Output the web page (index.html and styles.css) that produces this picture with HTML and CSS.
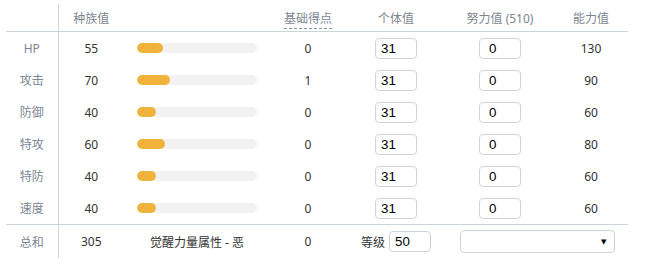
FILE: index.html
```html
<!DOCTYPE html>
<html lang="zh">
<head>
<meta charset="utf-8">
<link rel="stylesheet" href="styles.css">
</head>
<body>
<table class="stats">
  <colgroup>
    <col class="c-label"><col class="c-base"><col class="c-bar"><col class="c-pt"><col class="c-iv"><col class="c-ev"><col class="c-val">
  </colgroup>
  <thead>
    <tr>
      <th class="label"></th>
      <th>种族值</th>
      <th></th>
      <th><span class="dashed">基础得点</span></th>
      <th>个体值</th>
      <th>努力值 (510)</th>
      <th>能力值</th>
    </tr>
  </thead>
  <tbody>
    <tr>
      <td class="label">HP</td><td>55</td>
      <td><div class="bar"><div class="fill" style="width:21.57%"></div></div></td>
      <td>0</td>
      <td><input class="num iv" type="text" value="31"></td>
      <td><input class="num ev" type="text" value="0"></td>
      <td>130</td>
    </tr>
    <tr>
      <td class="label">攻击</td><td>70</td>
      <td><div class="bar"><div class="fill" style="width:27.45%"></div></div></td>
      <td>1</td>
      <td><input class="num iv" type="text" value="31"></td>
      <td><input class="num ev" type="text" value="0"></td>
      <td>90</td>
    </tr>
    <tr>
      <td class="label">防御</td><td>40</td>
      <td><div class="bar"><div class="fill" style="width:15.69%"></div></div></td>
      <td>0</td>
      <td><input class="num iv" type="text" value="31"></td>
      <td><input class="num ev" type="text" value="0"></td>
      <td>60</td>
    </tr>
    <tr>
      <td class="label">特攻</td><td>60</td>
      <td><div class="bar"><div class="fill" style="width:23.53%"></div></div></td>
      <td>0</td>
      <td><input class="num iv" type="text" value="31"></td>
      <td><input class="num ev" type="text" value="0"></td>
      <td>80</td>
    </tr>
    <tr>
      <td class="label">特防</td><td>40</td>
      <td><div class="bar"><div class="fill" style="width:15.69%"></div></div></td>
      <td>0</td>
      <td><input class="num iv" type="text" value="31"></td>
      <td><input class="num ev" type="text" value="0"></td>
      <td>60</td>
    </tr>
    <tr>
      <td class="label">速度</td><td>40</td>
      <td><div class="bar"><div class="fill" style="width:15.69%"></div></div></td>
      <td>0</td>
      <td><input class="num iv" type="text" value="31"></td>
      <td><input class="num ev" type="text" value="0"></td>
      <td>60</td>
    </tr>
  </tbody>
  <tfoot>
    <tr>
      <td class="label">总和</td><td>305</td>
      <td>觉醒力量属性 - 恶</td>
      <td>0</td>
      <td><span class="level">等级 <input class="num lv" type="text" value="50"></span></td>
      <td colspan="2"><span class="select-wrap"><select class="nature"><option></option></select></span></td>
    </tr>
  </tfoot>
</table>
</body>
</html>
```

FILE: styles.css
```css
html, body {
  margin: 0;
  padding: 0;
  background: #fff;
}
body {
  font-family: "Noto Sans", "Noto Sans CJK SC", sans-serif;
  font-size: 12px;
  color: #333;
}
.stats {
  margin: 4px 0 0 6px;
  border-collapse: collapse;
  table-layout: fixed;
  width: 622px;
}
.c-label { width: 52px; }
.c-base { width: 66px; }
.c-bar { width: 146px; }
.c-pt { width: 76px; }
.c-iv { width: 100px; }
.c-ev { width: 108px; }
.c-val { width: 74px; }

.stats th, .stats td {
  padding: 0;
  text-align: center;
  vertical-align: middle;
  white-space: nowrap;
}
.stats th {
  height: 27px;
  font-weight: normal;
  color: #7d8591;
  border-bottom: 1px solid #cdd3dd;
}
.stats tbody td {
  height: 32px;
}
.stats tfoot td {
  height: 33px;
  border-top: 1px solid #cdd3dd;
}
.stats .label {
  color: #7d8591;
  border-right: 1px solid #cdd3dd;
}
.dashed {
  border-bottom: 1px dashed #8a919c;
  padding-bottom: 1px;
}
.bar {
  width: 120px;
  height: 10px;
  margin: 0 auto;
  border-radius: 5px;
  background: #f2f2f2;
  overflow: hidden;
}
.fill {
  height: 100%;
  border-radius: 5px;
  background: #efb33c;
}
.num {
  box-sizing: border-box;
  width: 42px;
  height: 21px;
  margin: 0;
  border: 1px solid #cfd3d9;
  border-radius: 4px;
  font-family: "Liberation Sans", Arial, sans-serif;
  font-size: 13.33px;
  color: #000;
  padding: 0 5px;
  vertical-align: middle;
  outline: none;
}
.ev {
  padding-left: 9px;
}
.level {
  display: inline-flex;
  align-items: center;
  gap: 4px;
}
.select-wrap {
  position: relative;
  display: inline-block;
  vertical-align: middle;
}
.nature {
  appearance: none;
  -webkit-appearance: none;
  box-sizing: border-box;
  width: 155px;
  height: 23px;
  margin: 0;
  border: 1px solid #cfd3d9;
  border-radius: 4px;
  background: #fff;
  display: block;
}
.select-wrap::after {
  content: "▼";
  position: absolute;
  right: 8px;
  top: 50%;
  transform: translateY(-50%);
  font-family: "DejaVu Sans", sans-serif;
  font-size: 7px;
  color: #000;
  pointer-events: none;
}
```
